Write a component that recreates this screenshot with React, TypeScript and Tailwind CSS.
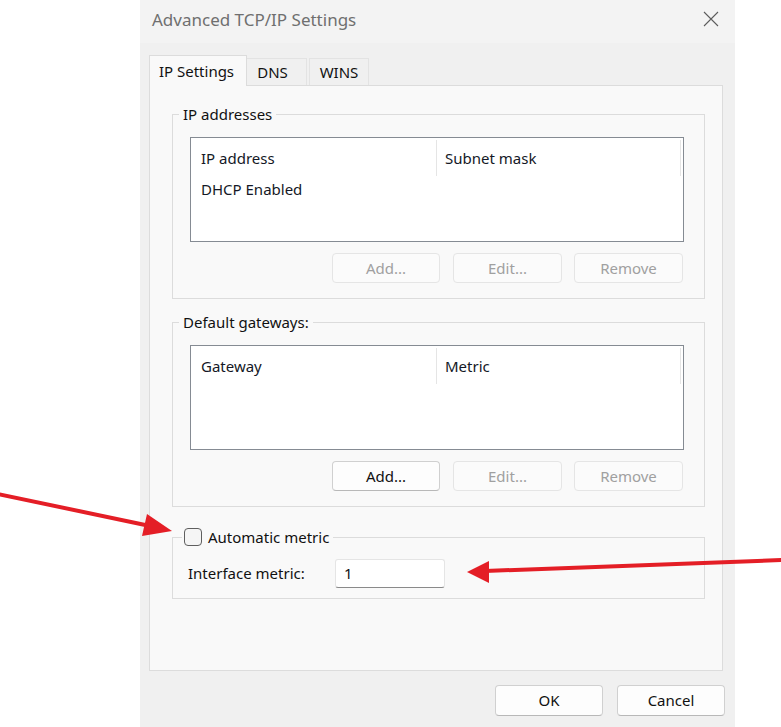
import React from 'react'

const font = { fontFamily: '"Noto Sans", "Open Sans", sans-serif' }

function Btn({ label, disabled, wide }: { label: string; disabled?: boolean; wide?: boolean }) {
  const w = wide ? 'w-[109px]' : 'w-[108px]'
  return (
    <button
      className={
        disabled
          ? `${w} h-[30px] rounded-[4px] border border-[#e5e5e5] bg-[#fbfbfb] text-[15px] text-[#a0a0a0]`
          : `${w} h-[30px] rounded-[4px] border border-[#d0d0d0] border-b-[#b8b8b8] bg-[#fdfdfd] text-[15px] text-[#111]`
      }
    >
      {label}
    </button>
  )
}

function ListView({ cols, rows }: { cols: [string, string]; rows: string[] }) {
  return (
    <div className="h-[105px] border border-[#858b93] bg-white flex flex-col text-[#141826]">
      <div className="flex h-[38px] pt-[2px]">
        <div className="w-[246px] h-[36px] border-r border-[#e5e5e5] pl-[10px] flex items-center">{cols[0]}</div>
        <div className="w-[244px] h-[36px] border-r border-[#e5e5e5] pl-[8px] flex items-center">{cols[1]}</div>
      </div>
      {rows.map((r) => (
        <div key={r} className="h-[26px] pl-[10px] flex items-center">{r}</div>
      ))}
    </div>
  )
}

function Group({ title, cols, rows, addEnabled }: { title: string; cols: [string, string]; rows: string[]; addEnabled?: boolean }) {
  return (
    <fieldset className="border border-[#dcdcdc] p-0">
      <legend className="ml-[6px] px-[4px] leading-[20px] text-[15px]">{title}</legend>
      <div className="pl-[17px] pr-[20px] pt-[13px] pb-[15px]">
        <ListView cols={cols} rows={rows} />
        <div className="flex justify-end mt-[11px] pr-[1px]">
          <Btn label="Add..." disabled={!addEnabled} />
          <div className="w-[13px]" />
          <Btn label="Edit..." disabled wide />
          <div className="w-[12px]" />
          <Btn label="Remove" disabled wide />
        </div>
      </div>
    </fieldset>
  )
}

export default function App() {
  return (
    <div className="relative w-[781px] h-[727px] bg-white overflow-hidden text-[#111]" style={font}>
      <div className="ml-[140px] w-[595px] h-[727px] flex flex-col bg-[#f0f0f0]">
        {/* title bar */}
        <div className="h-[43px] bg-[#f3f3f3] flex items-center justify-between pl-[12px] pr-[16px]">
          <span className="text-[17px] text-[#6f6f6f] -mt-[4px]">Advanced TCP/IP Settings</span>
          <svg width="16" height="16" viewBox="0 0 16 16" className="-mt-[6px]">
            <path d="M1 1 L15 15 M15 1 L1 15" stroke="#5c5c5c" strokeWidth="1.1" fill="none" />
          </svg>
        </div>

        <div className="flex-1 flex flex-col pl-[9px] pr-[12px]">
          {/* tabs */}
          <div className="flex items-end h-[42px] pt-[12px] text-[15px]">
            <div className="h-[31px] -mb-[1px] w-[98px] bg-[#f9f9f9] border border-b-0 border-[#dcdcdc] flex items-center justify-center relative z-10 pr-[3px]">
              IP Settings
            </div>
            <div className="h-[27px] w-[60px] bg-[#f0f0f0] border border-l-0 border-b-0 border-[#e3e3e3] flex items-center justify-center pr-[8px]">DNS</div>
            <div className="h-[27px] w-[60px] ml-[2px] bg-[#f0f0f0] border border-b-0 border-[#e3e3e3] flex items-center justify-center">WINS</div>
          </div>

          {/* panel */}
          <div className="h-[586px] bg-[#f9f9f9] border border-[#dcdcdc] pl-[22px] pr-[17px] pt-[18px] text-[15px]">
            <Group title="IP addresses" cols={['IP address', 'Subnet mask']} rows={['DHCP Enabled']} />
            <div className="h-[13px]" />
            <Group title="Default gateways:" cols={['Gateway', 'Metric']} rows={[]} addEnabled />
            <div className="h-[20px]" />
            <fieldset className="border border-[#dcdcdc] p-0">
              <legend className="ml-[9px] px-[2px] h-[20px] flex items-center gap-[6px]">
                <span className="w-[18px] h-[18px] rounded-[4px] border border-[#5f5f5f] bg-[#f5f5f5] inline-block" />
                <span className="leading-[20px] pr-[2px]">Automatic metric</span>
              </legend>
              <div className="flex items-center pl-[15px] pt-[12px] pb-[10px]">
                <span className="w-[147px]">Interface metric:</span>
                <div className="w-[110px] h-[29px] bg-white border border-[#e5e5e5] border-b-[#8a8a8a] rounded-[3px] pl-[8px] flex items-center">
                  1
                </div>
              </div>
            </fieldset>
          </div>

          {/* footer buttons */}
          <div className="flex justify-end gap-[14px] mt-[14px] text-[15px]">
            <button className="w-[108px] h-[31px] rounded-[4px] border border-[#d0d0d0] border-b-[#b8b8b8] bg-[#fdfdfd]">OK</button>
            <button className="w-[108px] h-[31px] rounded-[4px] border border-[#d0d0d0] border-b-[#b8b8b8] bg-[#fdfdfd] -mr-[2px]">Cancel</button>
          </div>
        </div>
      </div>

      {/* annotation arrows */}
      <svg className="absolute inset-0 pointer-events-none" width="781" height="727" viewBox="0 0 781 727">
        <line x1="-2" y1="494" x2="150" y2="526" stroke="#e41e26" strokeWidth="4" />
        <polygon points="172,531 147,514 142,536" fill="#e41e26" />
        <line x1="783" y1="560" x2="485" y2="571" stroke="#e41e26" strokeWidth="4" />
        <polygon points="467,572 489,561 489,583" fill="#e41e26" />
      </svg>
    </div>
  )
}
